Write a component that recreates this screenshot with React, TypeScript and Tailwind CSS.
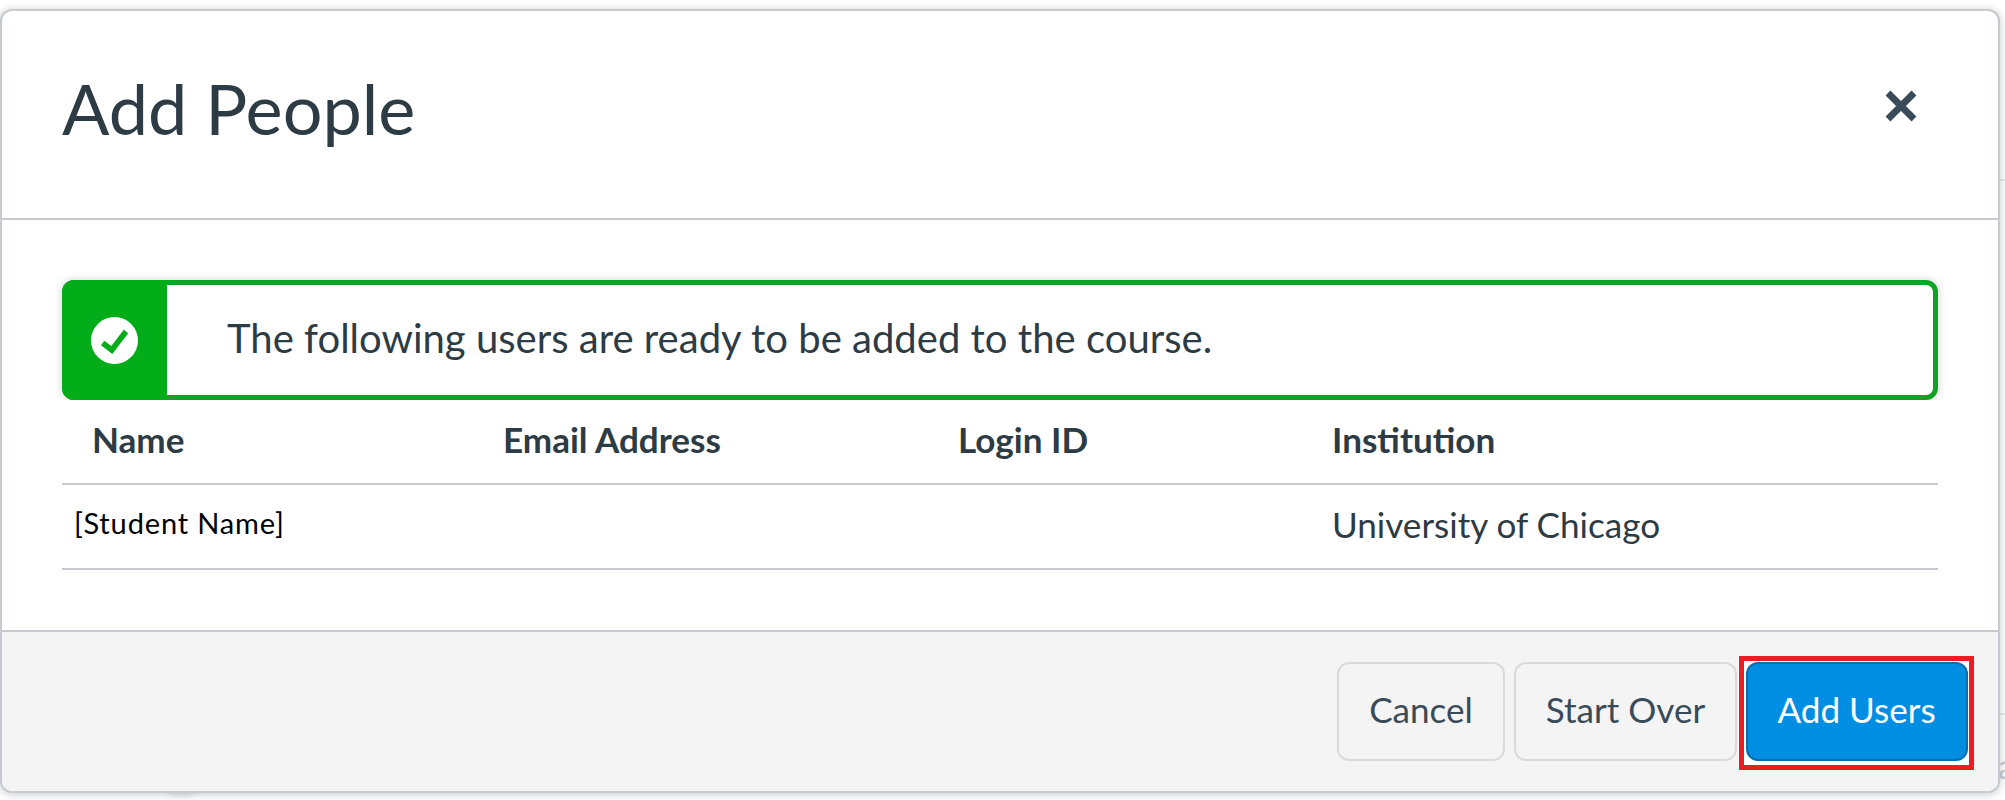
const columns = ['Name', 'Email Address', 'Login ID', 'Institution'];

function CloseIcon() {
  return (
    <svg className="block h-8 w-8" viewBox="0 0 32 32">
      <path d="M3 3L29 29M29 3L3 29" fill="none" stroke="#394b58" strokeWidth="6.8" />
    </svg>
  );
}

function CheckIcon() {
  return (
    <svg className="block h-[47px] w-[47px]" viewBox="0 0 47 47">
      <circle cx="23.5" cy="23.5" r="23.5" fill="#fff" />
      <path d="M11.7 26L20.8 33L35 14.5" fill="none" stroke="#00ac18" strokeWidth="5.6" />
    </svg>
  );
}

export default function App() {
  return (
    <div className="relative h-[800px] w-[2005px] overflow-hidden bg-white pt-[9px] font-['Lato',sans-serif] text-[#2d3b45]">
      <div className="absolute left-[1998px] top-[179px] h-[2px] w-[7px] bg-[#e8eaec]" />
      <div className="absolute left-[1998px] top-[713px] h-[2px] w-[7px] bg-[#e8eaec]" />
      <div className="absolute left-[1998px] top-[746px] text-[34px] leading-[40px] text-[#c7cdd1]">a</div>
      <div className="absolute left-[160px] top-[757px] h-10 w-[44px] rounded-full bg-[#e9ebed] blur-[2px]" />
      <div className="relative flex h-[784px] w-[2000px] flex-col overflow-hidden rounded-xl border-2 border-[#c7cbcf] bg-white shadow-[0_1px_8px_rgba(45,59,69,0.28)]">
        <header className="flex h-[209px] shrink-0 justify-between border-b-2 border-[#c7cbcf] pl-[60px] pr-[81px]">
          <h1 className="pt-[55px] text-[70.2px] leading-[84px]">Add People</h1>
          <button className="mt-[79px] h-8 w-8">
            <CloseIcon />
          </button>
        </header>
        <main className="flex h-[410px] shrink-0 flex-col px-[60px] pt-[60px]">
          <div className="flex h-[120px] shrink-0 rounded-xl border-[5px] border-[#0fa323] bg-white shadow-[0_0_10px_rgba(0,0,0,0.18)]">
            <div className="-my-[5px] -ml-[5px] flex w-[105px] items-center justify-center rounded-l-xl bg-[#00ac18]">
              <CheckIcon />
            </div>
            <p className="pl-[60px] pt-[29px] text-[40.05px] leading-[48px]">
              <span className="whitespace-nowrap">The following users are ready to be added to the course.</span>
            </p>
          </div>
          <div className="grid h-[85px] shrink-0 grid-cols-[411px_455px_374px_1fr] border-b-2 border-[#c7cbcf] bg-white pl-[30px] pt-[18px] text-[35.1px] font-bold leading-[42px]">
            {columns.map((name) => (
              <div key={name}>{name}</div>
            ))}
          </div>
          <div className="grid h-[85px] shrink-0 grid-cols-[1240px_1fr] border-b-2 border-[#c7cbcf] pl-[30px] pt-[18px] text-[35.1px] leading-[42px]">
            <div className="-ml-[18px] -mt-px text-[29px] tracking-[0.85px] text-black">[Student Name]</div>
            <div>University of Chicago</div>
          </div>
        </main>
        <footer className="flex grow items-start justify-end border-t-2 border-[#c7cbcf] bg-[#f4f4f4] pr-[24px] pt-[24px] text-[35.1px] leading-[42px] text-[#394b58]">
          <div className="flex pt-[6px]">
            <button className="mr-[9px] h-[99px] w-[168px] rounded-xl border-2 border-[#d9dadb] pb-[6px]">Cancel</button>
            <button className="mr-[2px] h-[99px] w-[223px] rounded-xl border-2 border-[#d9dadb] pb-[6px]">Start Over</button>
          </div>
          <div className="flex h-[114px] w-[235px] justify-center border-[5px] border-[#ec1c24] bg-white pt-px">
            <button className="h-[99px] w-[222px] rounded-xl border-2 border-[#0d6cae] bg-[#008ee2] pb-[6px] text-white">Add Users</button>
          </div>
        </footer>
      </div>
    </div>
  );
}
